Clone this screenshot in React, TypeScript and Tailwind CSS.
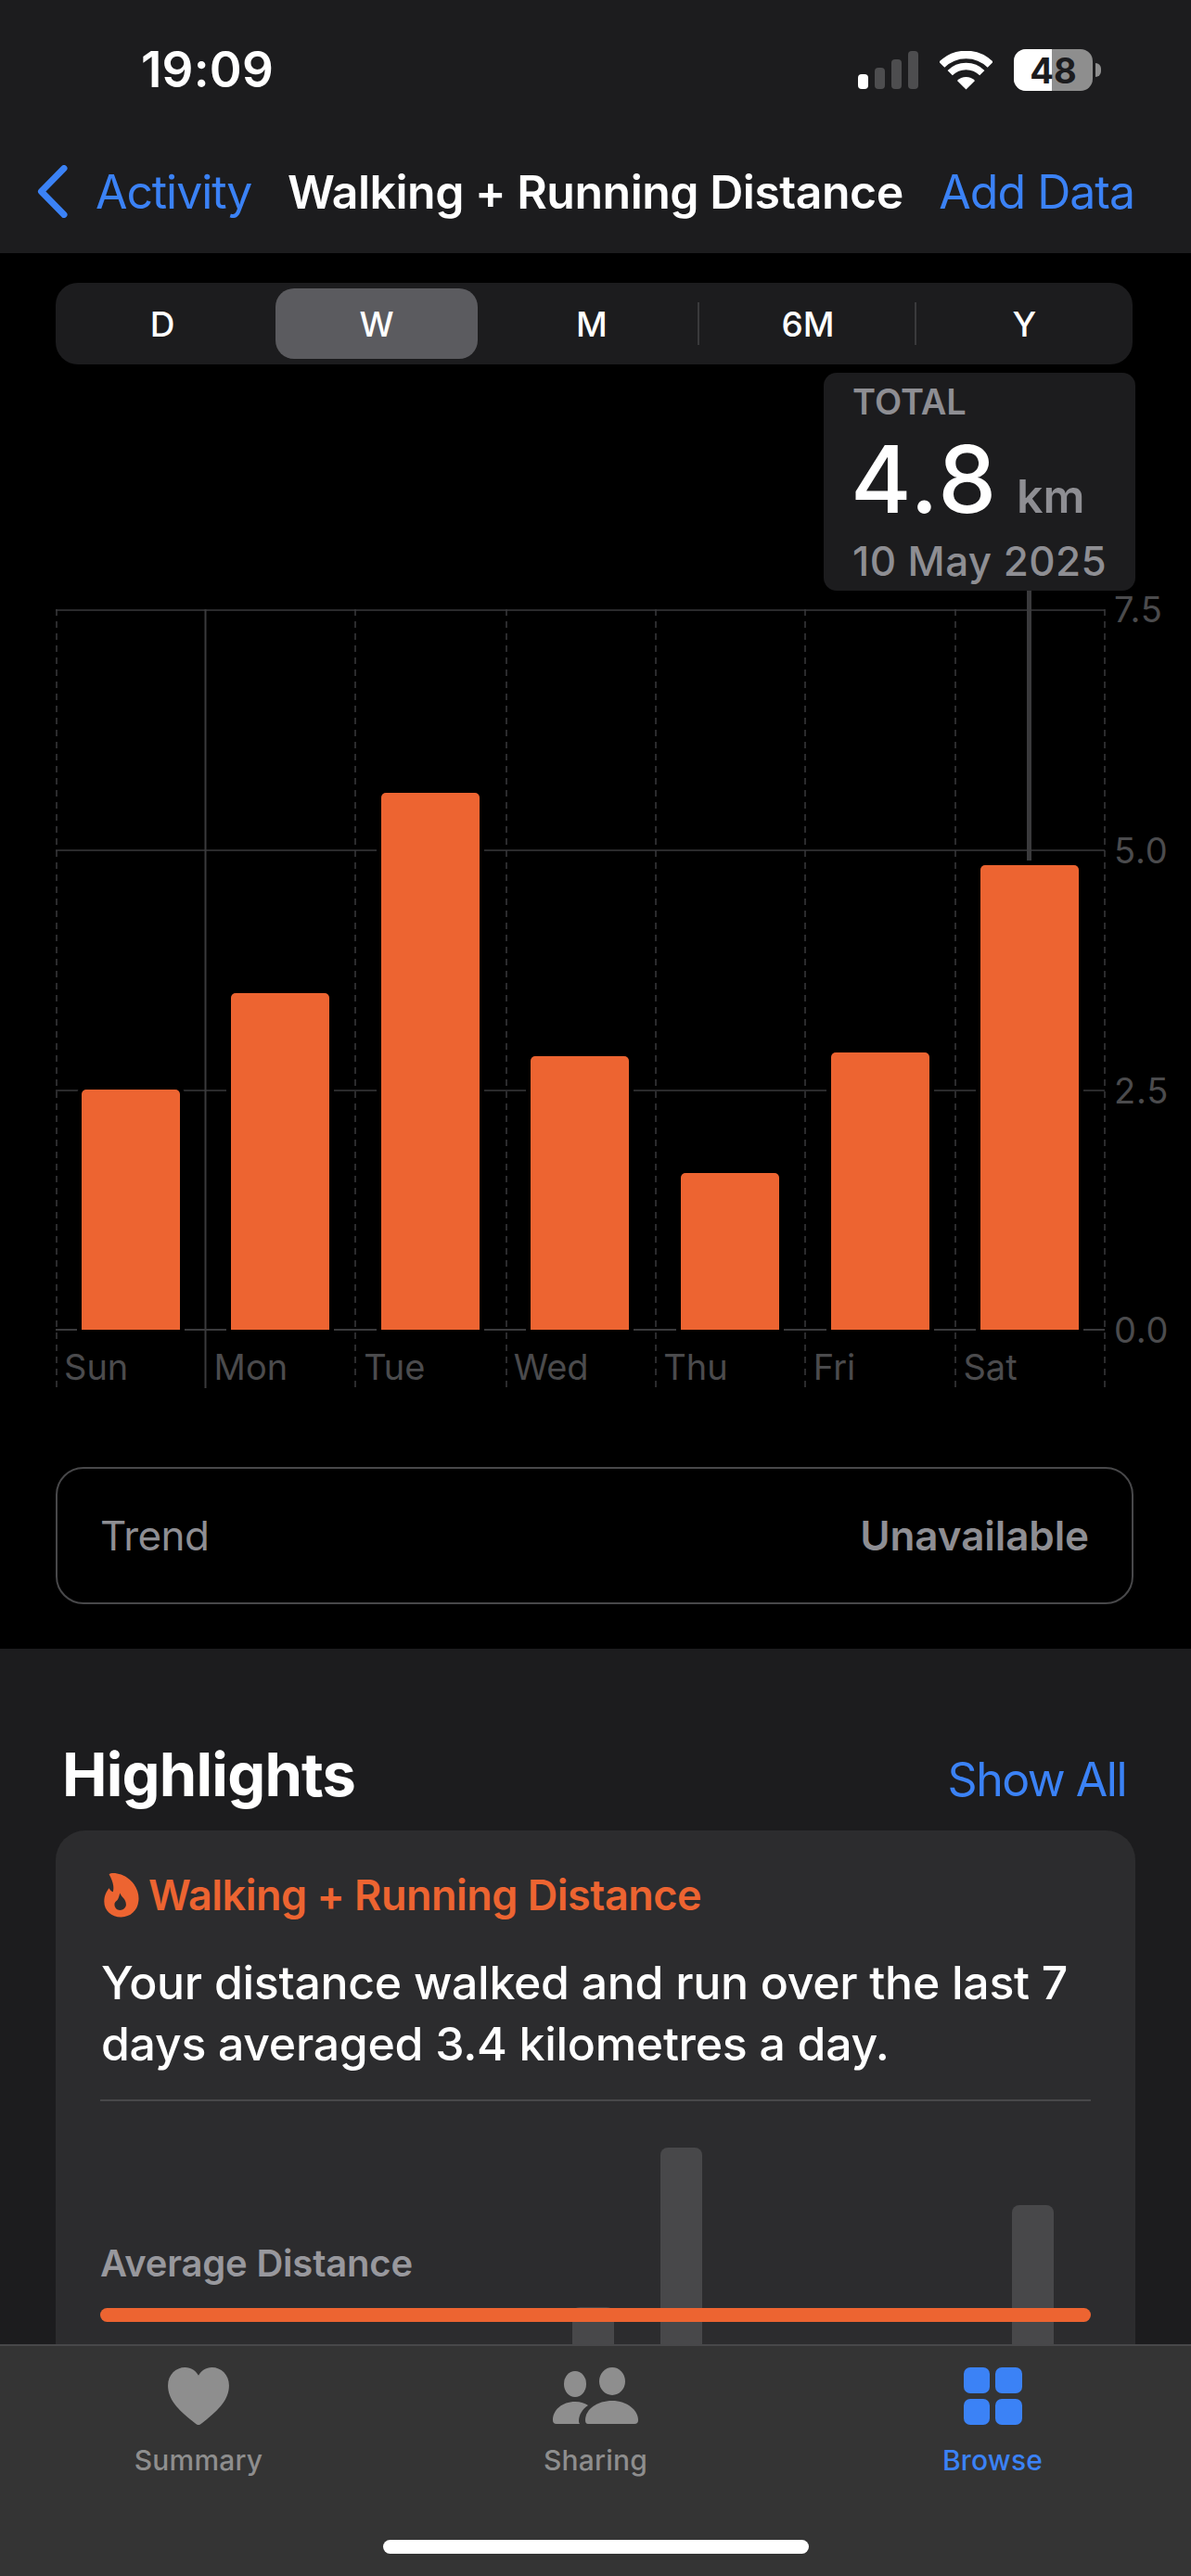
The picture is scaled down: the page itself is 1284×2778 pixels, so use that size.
const ORANGE = 'bg-[#ed6431]';

const bars = [
    { day: 'Sun', height: 259 },
    { day: 'Mon', height: 363 },
    { day: 'Tue', height: 579 },
    { day: 'Wed', height: 295 },
    { day: 'Thu', height: 169 },
    { day: 'Fri', height: 299 },
    { day: 'Sat', height: 501 },
];

const axis = [
    { label: '7.5', top: 0 },
    { label: '5.0', top: 260 },
    { label: '2.5', top: 519 },
    { label: '0.0', top: 777 },
];

const columns = [1, 323, 486, 647, 808, 970, 1131];

function StatusBar() {
    return (
        <div className="flex h-[151px] items-center justify-between pl-[152px] pr-[97px]">
            <span className="text-[53px] font-semibold leading-none tracking-[0.2px] text-white">19:09</span>
            <div className="flex items-center">
                <div className="flex h-[41px] items-end gap-[7px]">
                    <div className="h-[16px] w-[11px] rounded-[4px] bg-white" />
                    <div className="h-[23px] w-[11px] rounded-[4px] bg-[#4d4d4f]" />
                    <div className="h-[32px] w-[11px] rounded-[4px] bg-[#4d4d4f]" />
                    <div className="h-[41px] w-[11px] rounded-[4px] bg-[#4d4d4f]" />
                </div>
                <svg className="ml-[23px]" width="57" height="42" viewBox="0 0 57 42" fill="none">
                    <path d="M2.3 14.8A37 37 0 0 1 54.7 14.8" stroke="#fff" strokeWidth="8.5" />
                    <path d="M11.2 23.7A24.5 24.5 0 0 1 45.8 23.7" stroke="#fff" strokeWidth="7.5" />
                    <path d="M28.5 41.5L18.9 31.9A13.5 13.5 0 0 1 38.1 31.9Z" fill="#fff" />
                </svg>
                <div className="relative ml-[23px] flex h-[45px] w-[85px] overflow-hidden rounded-[13px] bg-[#8e8e8e]">
                    <div className="h-full w-[41px] bg-white" />
                    <span className="absolute inset-0 flex items-center justify-center text-[38px] font-bold leading-none text-[#1c1c1e]">48</span>
                </div>
                <div className="ml-[3px] h-[15px] w-[6px] rounded-r-full bg-[#8e8e8e]" />
            </div>
        </div>
    );
}

function NavBar() {
    return (
        <div className="flex h-[111px] items-center justify-between pl-[40px] pr-[61px] text-[50px] leading-none">
            <div className="flex items-center text-[#3b82f6]">
                <svg width="33" height="57" viewBox="0 0 33 57" fill="none">
                    <path d="M29 3.5L4.5 28.5L29 53.5" stroke="#3b82f6" strokeWidth="7" strokeLinecap="round" strokeLinejoin="round" />
                </svg>
                <span className="ml-[30px] tracking-[-1.1px]">Activity</span>
            </div>
            <span className="font-semibold tracking-[-0.5px] text-white">Walking + Running Distance</span>
            <span className="tracking-[-1px] text-[#3b82f6]">Add Data</span>
        </div>
    );
}

function Segments() {
    return (
        <div className="ml-[60px] grid h-[88px] w-[1161px] grid-cols-[230px_232px_232px_234px_1fr] rounded-[24px] bg-[#1c1c1e] py-[6px] text-[37px] font-medium leading-none text-white">
            <div className="flex items-center justify-center">D</div>
            <div className="mx-[7px] flex items-center justify-center rounded-[20px] bg-[#5b5b5f]">W</div>
            <div className="relative flex items-center justify-center">
                M
                <span className="absolute right-0 h-[46px] w-[2px] bg-[#3a3a3c]" />
            </div>
            <div className="relative flex items-center justify-center">
                6M
                <span className="absolute right-0 h-[46px] w-[2px] bg-[#3a3a3c]" />
            </div>
            <div className="flex items-center justify-center">Y</div>
        </div>
    );
}

function Chart() {
    return (
        <div className="relative ml-[60px] mt-[264px] h-[840px] w-[1131px]">
            {/* grid */}
            <svg className="absolute left-0 top-0 overflow-visible" width="1133" height="840" fill="none">
                <path d="M0 1H1131M0 260H1131M0 519H1131" stroke="#2a2a2c" strokeWidth="2" />
                <path d="M0 777H1131" stroke="#3a3a3c" strokeWidth="2" />
                {columns.map((x) => (
                    <path key={x} d={`M${x} 0V840`} stroke="#3a3a3c" strokeWidth="1.5" strokeDasharray="7 6" />
                ))}
                <path d="M161.5 0V840" stroke="#3a3a3c" strokeWidth="2" />
            </svg>

            <div className="relative grid h-[777px] grid-cols-7 items-end">
                {bars.map((b) => (
                    <div
                        key={b.day}
                        className={`mx-auto w-[106px] rounded-t-[5px] ${ORANGE} shadow-[0_0_0_5px_#000]`}
                        style={{ height: b.height }}
                    />
                ))}
            </div>

            <div className="relative grid h-[63px] grid-cols-7 items-start pt-[18px]">
                {bars.map((b) => (
                    <span key={b.day} className="pl-[9px] text-[38px] leading-[44px] text-[#4b4b4d]">{b.day}</span>
                ))}
            </div>

            {axis.map((a) => (
                <span
                    key={a.label}
                    className="absolute left-[1141px] -translate-y-1/2 text-[38px] leading-none tracking-[0.8px] text-[#4b4b4d]"
                    style={{ top: a.top }}
                >
                    {a.label}
                </span>
            ))}

            {/* selected bar callout */}
            <div className="absolute left-[1047px] top-[-20px] h-[291px] w-[5px] bg-[#3a3a3c]" />
            <div className="absolute left-[828px] top-[-255px] flex h-[235px] w-[336px] flex-col rounded-[14px] bg-[#1c1c1e] pl-[31px] pt-[11px]">
                <span className="text-[38px] font-semibold leading-[40px] text-[#8e8e93]">TOTAL</span>
                <div className="mt-[14px] flex h-[100px] items-baseline leading-[100px]">
                    <span className="-ml-[2px] text-[100px] font-medium tracking-[2px] text-white">4.8</span>
                    <span className="ml-[20px] text-[50px] font-semibold text-[#8e8e93]">km</span>
                </div>
                <span className="mt-[13px] whitespace-nowrap text-[44px] font-medium leading-[50px] tracking-[0.4px] text-[#8e8e93]">10 May 2025</span>
            </div>
        </div>
    );
}

function Flame() {
    return (
        <svg width="38" height="49" viewBox="35 36 116 148" className="shrink-0">
            <path
                fill="#ed6431"
                fillRule="evenodd"
                d="M52 42C60 34 95 38 118 58C142 78 152 105 149 130C146 162 122 183 92 183C60 183 36 162 36 132C36 112 44 98 52 88C56 94 60 100 65 100C70 80 62 60 52 42ZM88 104C92 118 108 122 108 142C108 152 98 160 88 160C78 160 70 152 70 142C70 130 80 130 82 122C85 116 86 110 88 104Z"
            />
        </svg>
    );
}

function Highlights() {
    return (
        <div className="bg-[#1c1c1e] pt-[101px]">
            <div className="flex h-[70px] items-baseline justify-between pl-[67px] pr-[70px]">
                <h2 className="text-[65px] font-bold leading-[70px] tracking-[-0.8px] text-white">Highlights</h2>
                <span className="text-[50px] leading-[70px] tracking-[-1.5px] text-[#3b82f6]">Show All</span>
            </div>
            <div className="relative ml-[60px] mt-[25px] h-[900px] w-[1164px] rounded-[32px] bg-[#2c2c2e] px-[48px] pt-[39px]">
                {/* faint bars sit behind the average line */}
                <div className="absolute left-[557px] top-[514px] h-[300px] w-[45px] rounded-t-[8px] bg-[#48484a]" />
                <div className="absolute left-[652px] top-[342px] h-[400px] w-[45px] rounded-t-[8px] bg-[#48484a]" />
                <div className="absolute left-[1031px] top-[404px] h-[400px] w-[45px] rounded-t-[8px] bg-[#48484a]" />

                <div className="flex h-[60px] items-center gap-[10px] pl-[4px]">
                    <Flame />
                    <span className="text-[45px] font-semibold leading-none tracking-[-0.5px] text-[#ed6431]">Walking + Running Distance</span>
                </div>
                <p className="mt-[32px] pl-[1px] text-[50px] font-medium leading-[66px] tracking-[-0.3px] text-white">
                    Your distance walked and run over the last 7<br />days averaged 3.4 kilometres a day.
                </p>
                <div className="mt-[27px] h-[2px] w-[1068px] bg-[#48484a]" />
                <div className="relative mt-[150px] text-[40px] font-semibold leading-[50px] tracking-[-0.2px] text-[#98989d]">Average Distance</div>
                <div className={`relative mt-[23px] h-[15px] w-[1068px] rounded-full ${ORANGE}`} />
            </div>
        </div>
    );
}

function TabBar() {
    return (
        <div className="flex h-[250px] shrink-0 flex-col items-center border-t-2 border-[#48484a] bg-[#343434] pt-[23px]">
            <div className="grid w-full grid-cols-3 text-[30px] font-medium leading-[40px] tracking-[0.2px] text-[#8e8e8e]">
                <div className="flex flex-col items-center gap-[18px]">
                    <svg width="68" height="64" viewBox="0 0 68 64" className="h-[62px]">
                        <path fill="#8e8e8e" d="M34 64C32 64 30 62 25 58C12 47 0 36 0 20C0 8 9 0 19 0C26 0 31 4 34 9C37 4 42 0 49 0C59 0 68 8 68 20C68 36 56 47 43 58C38 62 36 64 34 64Z" />
                    </svg>
                    <span>Summary</span>
                </div>
                <div className="flex flex-col items-center gap-[18px]">
                    <svg width="93" height="62" viewBox="0 0 93 62">
                        <g fill="#8e8e8e">
                            <ellipse cx="64" cy="15" rx="14" ry="15" />
                            <ellipse cx="24" cy="18" rx="12" ry="14" />
                            <path d="M38 61Q35 61 35 57C35 45 48 36 64 36C80 36 92 46 92 57Q92 61 88 61Z" />
                            <path d="M0 57C0 46 10 37 24 37C30 37 35 39 38 41C32 45 28 51 28 58Q28 60 29 61L4 61Q0 61 0 57Z" />
                        </g>
                    </svg>
                    <span>Sharing</span>
                </div>
                <div className="flex flex-col items-center gap-[18px] text-[#3b82f6]">
                    <div className="grid h-[62px] w-[63px] grid-cols-2 gap-[6px]">
                        <div className="rounded-[7px] bg-[#3b82f6]" />
                        <div className="rounded-[7px] bg-[#3b82f6]" />
                        <div className="rounded-[7px] bg-[#3b82f6]" />
                        <div className="rounded-[7px] bg-[#3b82f6]" />
                    </div>
                    <span>Browse</span>
                </div>
            </div>
            <div className="mt-[66px] h-[15px] w-[459px] rounded-full bg-white" />
        </div>
    );
}

export default function App() {
    return (
        <div className="flex h-[2778px] w-[1284px] flex-col overflow-hidden bg-black font-['Inter',sans-serif]">
            <div className="relative z-10 h-[273px] shrink-0 bg-[#1c1c1e]">
                <StatusBar />
                <NavBar />
            </div>
            <main className="min-h-0 flex-1 overflow-hidden">
                <section className="h-[1505px] bg-black pt-[32px]">
                    <Segments />
                    <Chart />
                    <div className="ml-[60px] mt-[85px] flex h-[148px] w-[1162px] items-center justify-between rounded-[30px] border-2 border-[#48484a] px-[46px] text-[44px] leading-none text-[#8e8e93]">
                        <span className="tracking-[-0.6px]">Trend</span>
                        <span className="font-semibold tracking-[-0.1px]">Unavailable</span>
                    </div>
                </section>
                <Highlights />
            </main>
            <TabBar />
        </div>
    );
}
